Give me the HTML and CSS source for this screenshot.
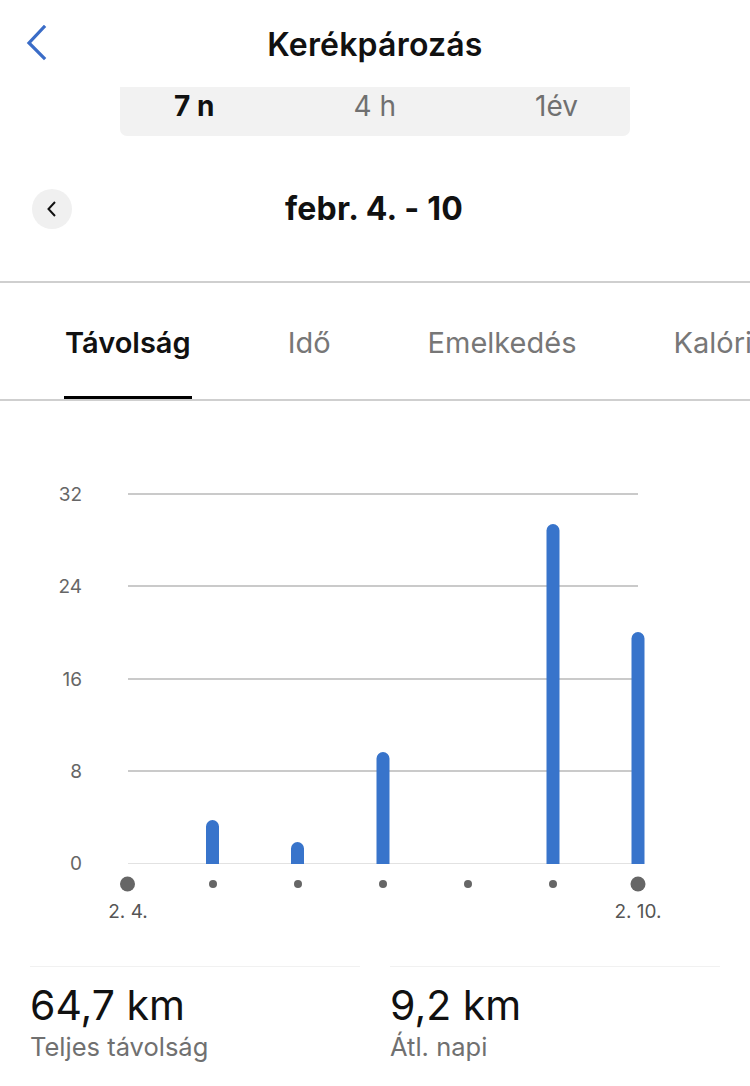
FILE: index.html
```html
<!DOCTYPE html>
<html lang="hu">
<head>
<meta charset="utf-8">
<title>Kerékpározás</title>
<link rel="stylesheet" href="styles.css">
</head>
<body>
<div class="page">
  <header class="topbar">
    <button class="back" aria-label="Vissza">
      <svg width="24" height="36" viewBox="0 0 24 36"><path d="M18 2 L3 18 L18 33" fill="none" stroke="#3a6cc7" stroke-width="3.2" stroke-linecap="square"/></svg>
    </button>
    <h1 class="title">Kerékpározás</h1>
    <span class="spacer"></span>
  </header>

  <div class="segmented">
    <span class="seg active">7 n</span>
    <span class="seg">4 h</span>
    <span class="seg">1év</span>
  </div>

  <div class="daterow">
    <button class="prev" aria-label="Előző">
      <svg width="12" height="18" viewBox="0 0 12 18"><path d="M9 2 L2.5 9 L9 16" fill="none" stroke="#111" stroke-width="2"/></svg>
    </button>
    <div class="range">febr. 4. - 10</div>
    <span class="prev-spacer"></span>
  </div>

  <nav class="tabs">
    <span class="tab active">Távolság</span>
    <span class="tab">Idő</span>
    <span class="tab">Emelkedés</span>
    <span class="tab">Kalória</span>
  </nav>

  <div class="chart">
    <svg width="750" height="530" viewBox="0 0 750 530">
      <g class="grid">
        <line x1="128" y1="93" x2="638" y2="93"/>
        <line x1="128" y1="185" x2="638" y2="185"/>
        <line x1="128" y1="278" x2="638" y2="278"/>
        <line x1="128" y1="370" x2="638" y2="370"/>
      </g>
      <line class="zero" x1="128" y1="462.5" x2="638" y2="462.5"/>
      <g class="ylab">
        <text x="82" y="100">32</text>
        <text x="82" y="192">24</text>
        <text x="82" y="285">16</text>
        <text x="82" y="377">8</text>
        <text x="82" y="469">0</text>
      </g>
      <g class="bars">
        <path d="M206 463 V425.5 A6.5 6.5 0 0 1 219 425.5 V463 Z"/>
        <path d="M291 463 V447.5 A6.5 6.5 0 0 1 304 447.5 V463 Z"/>
        <path d="M376.5 463 V357.5 A6.5 6.5 0 0 1 389.5 357.5 V463 Z"/>
        <path d="M546.5 463 V129.5 A6.5 6.5 0 0 1 559.5 129.5 V463 Z"/>
        <path d="M631.5 463 V237.5 A6.5 6.5 0 0 1 644.5 237.5 V463 Z"/>
      </g>
      <g class="dots">
        <circle cx="127.5" cy="483" r="7.5"/>
        <circle cx="213" cy="483" r="4"/>
        <circle cx="298" cy="483" r="4"/>
        <circle cx="383" cy="483" r="4"/>
        <circle cx="468" cy="483" r="4"/>
        <circle cx="553" cy="483" r="4"/>
        <circle cx="638" cy="483" r="7.5"/>
      </g>
      <g class="xlab">
        <text x="128" y="517">2. 4.</text>
        <text x="638" y="517">2. 10.</text>
      </g>
    </svg>
  </div>

  <section class="stats">
    <div class="stat">
      <div class="value">64,7 km</div>
      <div class="label">Teljes távolság</div>
    </div>
    <div class="stat">
      <div class="value">9,2 km</div>
      <div class="label">Átl. napi</div>
    </div>
  </section>
</div>
</body>
</html>
```

FILE: styles.css
```css
* { box-sizing: border-box; }
html, body { margin: 0; padding: 0; background: #fff; }
body {
  font-family: Inter, Roboto, "Liberation Sans", Arial, sans-serif;
  color: #111;
  width: 750px;
  height: 1086px;
  overflow: hidden;
}
button { border: 0; background: none; padding: 0; margin: 0; cursor: pointer; }

.topbar {
  height: 88px;
  display: flex;
  align-items: center;
  padding: 0 22px 0 26px;
}
.back { width: 40px; height: 40px; display: flex; align-items: center; justify-content: flex-start; margin-top: -2px; }
.spacer { width: 40px; }
.title {
  flex: 1;
  margin: 0;
  text-align: center;
  font-size: 32px;
  font-weight: 600;
  letter-spacing: 0.2px;
  padding-right: 4px;
}

.segmented {
  margin: 0 120px;
  height: 49px;
  background: #f2f2f2;
  border-radius: 0 0 7px 7px;
  display: flex;
  justify-content: space-between;
  align-items: center;
  padding: 0 52px 12px 54px;
  font-size: 28px;
  color: #707070;
  margin-top: -1px;
}
.seg.active { color: #111; font-weight: 700; }

.daterow {
  height: 147px;
  display: flex;
  align-items: center;
  padding: 0 32px;
  border-bottom: 2px solid #cfcfcf;
}
.daterow .prev {
  width: 40px; height: 40px; border-radius: 50%;
  background: #f0f0f0;
  display: flex; align-items: center; justify-content: center;
}
.prev-spacer { width: 40px; }
.range {
  flex: 1;
  text-align: center;
  font-size: 32px;
  font-weight: 700;
  letter-spacing: 0.2px;
  padding-right: 2px;
}

.tabs {
  height: 118px;
  display: flex;
  align-items: stretch;
  border-bottom: 2px solid #cfcfcf;
  padding-left: 64px;
  white-space: nowrap;
  overflow: hidden;
  font-size: 29px;
}
.tab {
  display: flex;
  align-items: center;
  color: #777;
  padding: 6px 1px 0;
  border-bottom: 3px solid transparent;
  margin-right: 95px;
}
.tab.active {
  color: #111;
  font-weight: 600;
  border-bottom-color: #000;
}

.chart { height: 565px; }
.chart svg { display: block; }
.grid line { stroke: #cacaca; stroke-width: 2; }
.zero { stroke: #e2e2e2; stroke-width: 1; }
.ylab text { font-size: 19px; fill: #666; text-anchor: end; font-family: Inter, Roboto, sans-serif; }
.bars path { fill: #3874cb; }
.dots circle { fill: #666; }
.xlab text { font-size: 19px; fill: #555; text-anchor: middle; font-family: Inter, Roboto, sans-serif; }

.stats {
  display: flex;
  gap: 30px;
  padding: 0 30px;
}
.stat {
  flex: 1;
  border-top: 1px solid #f1f1f1;
  padding-top: 14px;
}
.value {
  font-size: 41px;
  line-height: 48px;
  color: #111;
}
.label {
  font-size: 25.5px;
  color: #707070;
  margin-top: 2px;
}
```
